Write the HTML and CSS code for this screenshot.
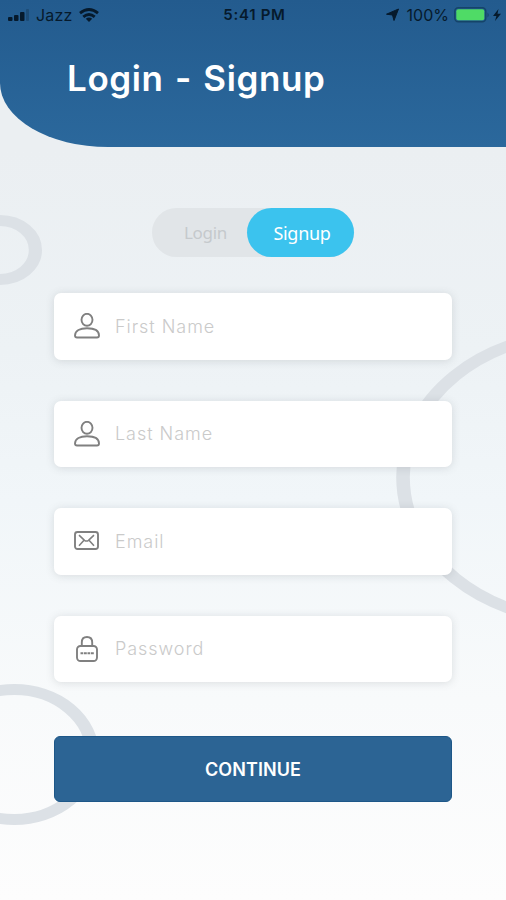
FILE: index.html
```html
<!DOCTYPE html>
<html lang="en">
<head>
  <meta charset="UTF-8" />
  <meta name="viewport" content="width=device-width, initial-scale=1.0"/>
  <title>Login - Signup</title>
  <link rel="stylesheet" href="styles.css">
</head>
<body>

<svg class="rings" viewBox="0 0 506 900" fill="none" stroke="#dce1e6" stroke-width="11">
  <circle transform="scale(1.2 1)" cx="0" cy="250" r="29.5"/>
  <circle transform="scale(1.24 1)" cx="468.5" cy="477" r="143.5"/>
  <circle transform="scale(1.2 1)" cx="12" cy="754.5" r="65"/>
</svg>

<header class="header">
  <div class="status-bar">
    <div class="status-left">
      <svg class="signal" viewBox="0 0 22 14">
        <rect x="0" y="9" width="4.5" height="4" rx="1"/>
        <rect x="6" y="7" width="4.5" height="6" rx="1"/>
        <rect x="12" y="4" width="4.5" height="9" rx="1"/>
        <rect x="18" y="1" width="3" height="12" rx="1" opacity="0.25"/>
      </svg>
      <span class="carrier">Jazz</span>
      <svg class="wifi" viewBox="0 0 20 14" fill="none" stroke="#061a2c" stroke-width="2.8">
        <path d="M1 5.2Q10 -2.2 19 5.2"/>
        <path d="M4.3 8.9Q10 4 15.7 8.9"/>
        <path d="M10 14L6.8 10.8Q10 8.3 13.2 10.8Z" fill="#061a2c" stroke="none"/>
      </svg>
    </div>
    <span class="time">5:41 PM</span>
    <div class="status-right">
      <svg class="location" viewBox="0 0 13 13"><path d="M12.5 1L8 12.5L6.5 7L0.5 6.2Z" stroke="#061a2c" stroke-linejoin="round"/></svg>
      <span class="percent">100%</span>
      <svg class="battery" viewBox="0 0 36 16">
        <rect x="0.8" y="0.8" width="31" height="14" rx="3.5" fill="none" stroke="#154469" stroke-width="1.4"/>
        <rect x="2.3" y="2.3" width="28" height="11" rx="2" fill="#4fdb66"/>
        <path d="M33.5 5.5Q36 8 33.5 10.5Z" fill="#154469"/>
      </svg>
      <svg class="bolt" viewBox="0 0 8 12"><path d="M5.5 0L0 7H3.4L2 12L8 4.8H4.5Z"/></svg>
    </div>
  </div>
  <h1>Login - Signup</h1>
</header>

<main class="content">
  <div class="toggle">
    <span class="tab">Login</span>
    <span class="tab active">Signup</span>
  </div>

  <form class="form">
    <label class="field">
      <svg class="icon" viewBox="0 0 26 26">
        <ellipse cx="13" cy="6.8" rx="5.5" ry="6"/>
        <path d="M3 24.5Q1 24.5 1 22.5C1 17.5 6 15.2 13 15.2S25 17.5 25 22.5Q25 24.5 23 24.5Z"/>
      </svg>
      <input type="text" class="first" placeholder="First Name" />
    </label>
    <label class="field">
      <svg class="icon" viewBox="0 0 26 26">
        <ellipse cx="13" cy="6.8" rx="5.5" ry="6"/>
        <path d="M3 24.5Q1 24.5 1 22.5C1 17.5 6 15.2 13 15.2S25 17.5 25 22.5Q25 24.5 23 24.5Z"/>
      </svg>
      <input type="text" class="last" placeholder="Last Name" />
    </label>
    <label class="field">
      <svg class="icon" viewBox="0 0 26 26">
        <rect x="1" y="4" width="23" height="17" rx="2.5"/>
        <path d="M5 7.2L10.5 12.3Q12.5 13.8 14.5 12.3L20 7.2M5 17.8L10 12.2M20 17.8L15 12.2" stroke-width="1.6"/>
      </svg>
      <input type="text" class="email" placeholder="Email" />
    </label>
    <label class="field">
      <svg class="icon" viewBox="0 0 26 26">
        <path d="M7.8 10V6.5Q7.8 1 13 1T18.2 6.5V10"/>
        <rect x="3" y="10" width="20" height="15" rx="3.5"/>
        <path d="M6.5 17.2H19.8" stroke-dasharray="2.8 0.7"/>
      </svg>
      <input type="password" class="password" placeholder="Password" />
    </label>
    <button type="button">CONTINUE</button>
  </form>
</main>

</body>
</html>
```
FILE: styles.css
```css
* {
  box-sizing: border-box;
}

body {
  margin: 0;
  height: 900px;
  overflow: hidden;
  font-family: Inter, "Liberation Sans", sans-serif;
  background: linear-gradient(#ebeff2 150px, #edf2f5 350px, #f1f6f9 500px, #f8fafb 700px, #fdfdfd 900px);
}

/* decorative rings behind the form */
.rings {
  position: absolute;
  top: 0;
  left: 0;
  width: 506px;
  height: 900px;
  z-index: -1;
}

.header {
  height: 147px;
  background: linear-gradient(#235b8e, #2b689c);
  border-bottom-left-radius: 108px 64px;
}

.status-bar {
  display: grid;
  grid-template-columns: 1fr auto 1fr;
  align-items: center;
  height: 29px;
  padding: 0 5px 0 8px;
  color: #061a2c;
  fill: #061a2c;
  font-size: 15px;
}

.status-left,
.status-right {
  display: flex;
  align-items: center;
}

.status-right {
  justify-content: flex-end;
}

.signal {
  width: 22px;
  height: 14px;
  margin-right: 6px;
}

.carrier {
  font-size: 16px;
  letter-spacing: 0.2px;
  margin-right: 6px;
}

.wifi {
  width: 20px;
  height: 14px;
}

.time {
  font-weight: 600;
  letter-spacing: 0.7px;
}

.location {
  width: 13px;
  height: 13px;
  margin-right: 8px;
}

.percent {
  font-size: 16px;
  margin-right: 5px;
}

.battery {
  width: 36px;
  height: 16px;
  margin-right: 3px;
}

.bolt {
  width: 8px;
  height: 12px;
}

h1 {
  margin: 28px 0 0 67px;
  color: #fff;
  font-size: 35px;
  line-height: 42px;
  font-weight: 600;
  letter-spacing: 0.6px;
  word-spacing: 2px;
  white-space: nowrap;
}

.content {
  padding: 61px 54px 0;
}

.toggle {
  display: flex;
  width: 202px;
  height: 49px;
  margin: 0 auto 36px;
  border-radius: 25px;
  background: #e1e5e8;
  font-family: "Noto Sans", sans-serif;
  font-size: 18px;
  letter-spacing: -0.3px;
}

.tab {
  display: flex;
  align-items: center;
  justify-content: center;
  width: 95px;
  padding-left: 12px;
  color: #c5c9cc;
  font-size: 17px;
}

.tab.active {
  width: 107px;
  padding-left: 3px;
  border-radius: 25px;
  background: #3bc3ee;
  color: #fff;
  font-size: 18px;
}

.form {
  display: flex;
  flex-direction: column;
  gap: 41px;
}

.field {
  display: flex;
  align-items: center;
  height: 66.5px;
  padding: 0 20px;
  border-radius: 7px;
  background: #fff;
  box-shadow: 0 1px 9px rgba(80, 85, 90, 0.17);
}

.icon {
  width: 26px;
  height: 26px;
  margin-right: 15px;
  fill: none;
  stroke: #808080;
  stroke-width: 1.9;
}

input {
  flex: 1;
  min-width: 0;
  padding: 0;
  border: none;
  outline: none;
  background: none;
  font-family: Inter, "Liberation Sans", sans-serif;
  font-size: 18px;
  font-weight: 300;
  letter-spacing: 0.95px;
}

input::placeholder {
  color: #cacaca;
}

button {
  height: 66px;
  margin-top: 13px;
  border: 1px solid #1d5788;
  border-radius: 6px;
  background: #2c6494;
  color: #fff;
  font-family: Inter, "Liberation Sans", sans-serif;
  font-size: 18px;
  font-weight: 600;
  letter-spacing: 0.1px;
}
```
